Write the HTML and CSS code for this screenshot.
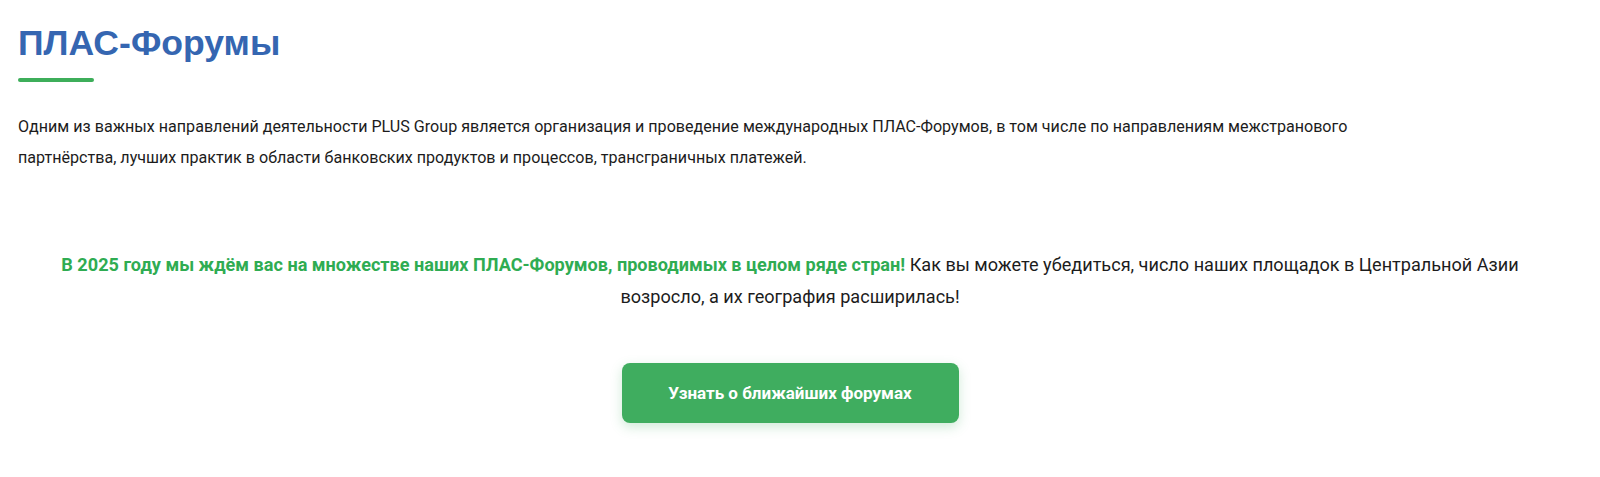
FILE: index.html
```html
<!DOCTYPE html>
<html lang="ru">
<head>
  <meta charset="UTF-8" />
  <meta name="viewport" content="width=device-width, initial-scale=1.0" />
  <title>ПЛАС-Форумы</title>
  <link rel="stylesheet" href="styles.css">
</head>
<body>
  <div class="container">
    <!-- Section title -->
    <h1 class="title">ПЛАС-Форумы</h1>
    <div class="title-line"></div>

    <p class="intro">
      Одним из важных направлений деятельности PLUS Group является организация и проведение международных ПЛАС-Форумов, в том числе по направлениям межстранового партнёрства, лучших практик в области банковских продуктов и процессов, трансграничных платежей.
    </p>

    <p class="announce">
      <span class="accent">В 2025 году мы ждём вас на множестве наших ПЛАС-Форумов, проводимых в целом ряде стран!</span>
      Как вы можете убедиться, число наших площадок в Центральной Азии возросло, а их география расширилась!
    </p>

    <div class="actions">
      <a href="#" class="button">Узнать о ближайших форумах</a>
    </div>
  </div>
</body>
</html>
```

FILE: styles.css
```css
body {
  font-family: Roboto, "Noto Sans", sans-serif;
  background-color: #fff;
  color: #1c1c1c;
  margin: 0;
}
.container {
  padding: 18px 38px 40px 18px;
}
.title {
  font-family: "Liberation Sans", Arial, sans-serif;
  font-size: 35.6px;
  font-weight: bold;
  color: #3566b1;
  margin: 0;
  line-height: 50px;
}
.title-line {
  width: 76px;
  height: 4px;
  border-radius: 2px;
  background-color: #3dae5a;
  margin-top: 10px;
}
.intro {
  font-size: 16.1px;
  line-height: 31px;
  max-width: 1360px;
  margin: 29px 0 0;
}
.announce {
  font-size: 18.1px;
  line-height: 32px;
  text-align: center;
  margin: 76px 20px 0;
}
.accent {
  color: #2fac52;
  font-weight: bold;
}
.actions {
  display: flex;
  justify-content: center;
  margin-top: 50px;
}
.button {
  display: block;
  width: 337px;
  box-sizing: border-box;
  padding: 20px 0;
  text-align: center;
  background-color: #3fad5f;
  color: #fff;
  font-weight: bold;
  font-size: 17px;
  line-height: 20px;
  text-decoration: none;
  border-radius: 8px;
  box-shadow: 0 4px 12px rgba(63, 173, 95, 0.25);
}
.button:hover {
  background-color: #36994f;
}
```
